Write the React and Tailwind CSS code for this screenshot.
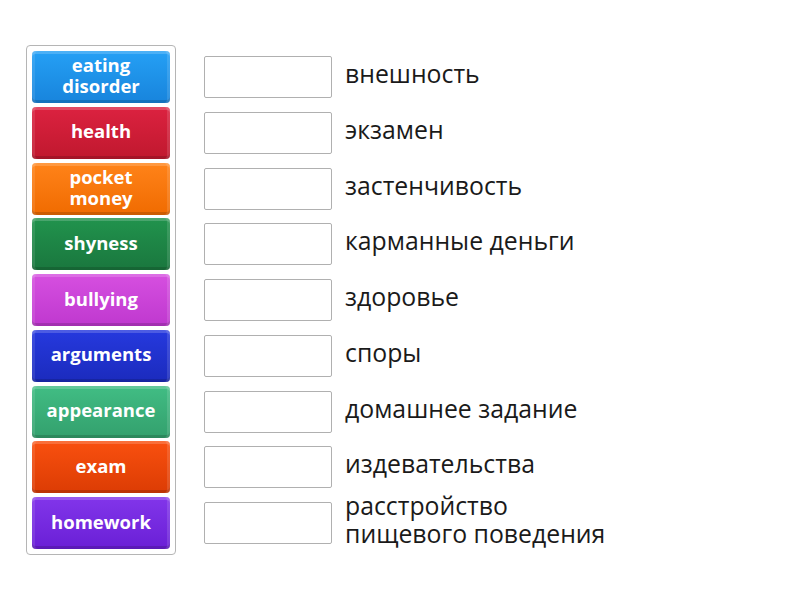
import React from "react";

const tiles = [
  { label: ["eating", "disorder"], cls: "from-[#25a0f5] to-[#1884dc]" },
  { label: ["health"], cls: "from-[#dc2240] to-[#c0182e]" },
  { label: ["pocket", "money"], cls: "from-[#ff8318] to-[#f06b00]" },
  { label: ["shyness"], cls: "from-[#21934d] to-[#1a773e]" },
  { label: ["bullying"], cls: "from-[#d64fe0] to-[#bf38cf]" },
  { label: ["arguments"], cls: "from-[#2639de] to-[#1b2bbd]" },
  { label: ["appearance"], cls: "from-[#41bd84] to-[#33a06d]" },
  { label: ["exam"], cls: "from-[#f9500f] to-[#dc3c04]" },
  { label: ["homework"], cls: "from-[#8235ea] to-[#6a1ed6]" },
];

const words = [
  ["внешность"],
  ["экзамен"],
  ["застенчивость"],
  ["карманные деньги"],
  ["здоровье"],
  ["споры"],
  ["домашнее задание"],
  ["издевательства"],
  ["расстройство", "пищевого поведения"],
];

export default function App() {
  return (
    <div
      className="w-[800px] h-[600px] bg-white flex items-start pl-[26px] pt-[45px]"
      style={{ fontFamily: '"Open Sans", "Noto Sans", sans-serif' }}
    >
      <div className="w-[150px] border border-[#b5b5b5] rounded-[4px] p-[5px] flex flex-col gap-[3.75px]">
        {tiles.map((t, i) => (
          <div
            key={i}
            className={`h-[52px] rounded-[4px] bg-gradient-to-b ${t.cls} shadow-[inset_0_3px_0_rgba(255,255,255,0.18),inset_3px_0_0_rgba(255,255,255,0.1),inset_-3px_0_0_rgba(255,255,255,0.12),inset_0_-3px_0_rgba(0,0,0,0.15)] flex flex-col items-center justify-center text-white font-bold text-[18.5px] leading-[21px] pb-[4px]`}
          >
            {t.label.map((l, j) => (
              <span key={j}>{l}</span>
            ))}
          </div>
        ))}
      </div>
      <div className="ml-[28px] pt-[6px] flex flex-col gap-[3.75px]">
        {words.map((w, i) => (
          <div key={i} className="h-[52px] flex items-center">
            <div className="w-[128px] h-[42px] border border-[#b0b0b0] rounded-[2px] bg-white shrink-0" />
            <div className="ml-[13px] text-[24.8px] leading-[28px] text-[#1a1a1a] flex flex-col pb-[8px]">
              {w.map((l, j) => (
                <span key={j}>{l}</span>
              ))}
            </div>
          </div>
        ))}
      </div>
    </div>
  );
}
